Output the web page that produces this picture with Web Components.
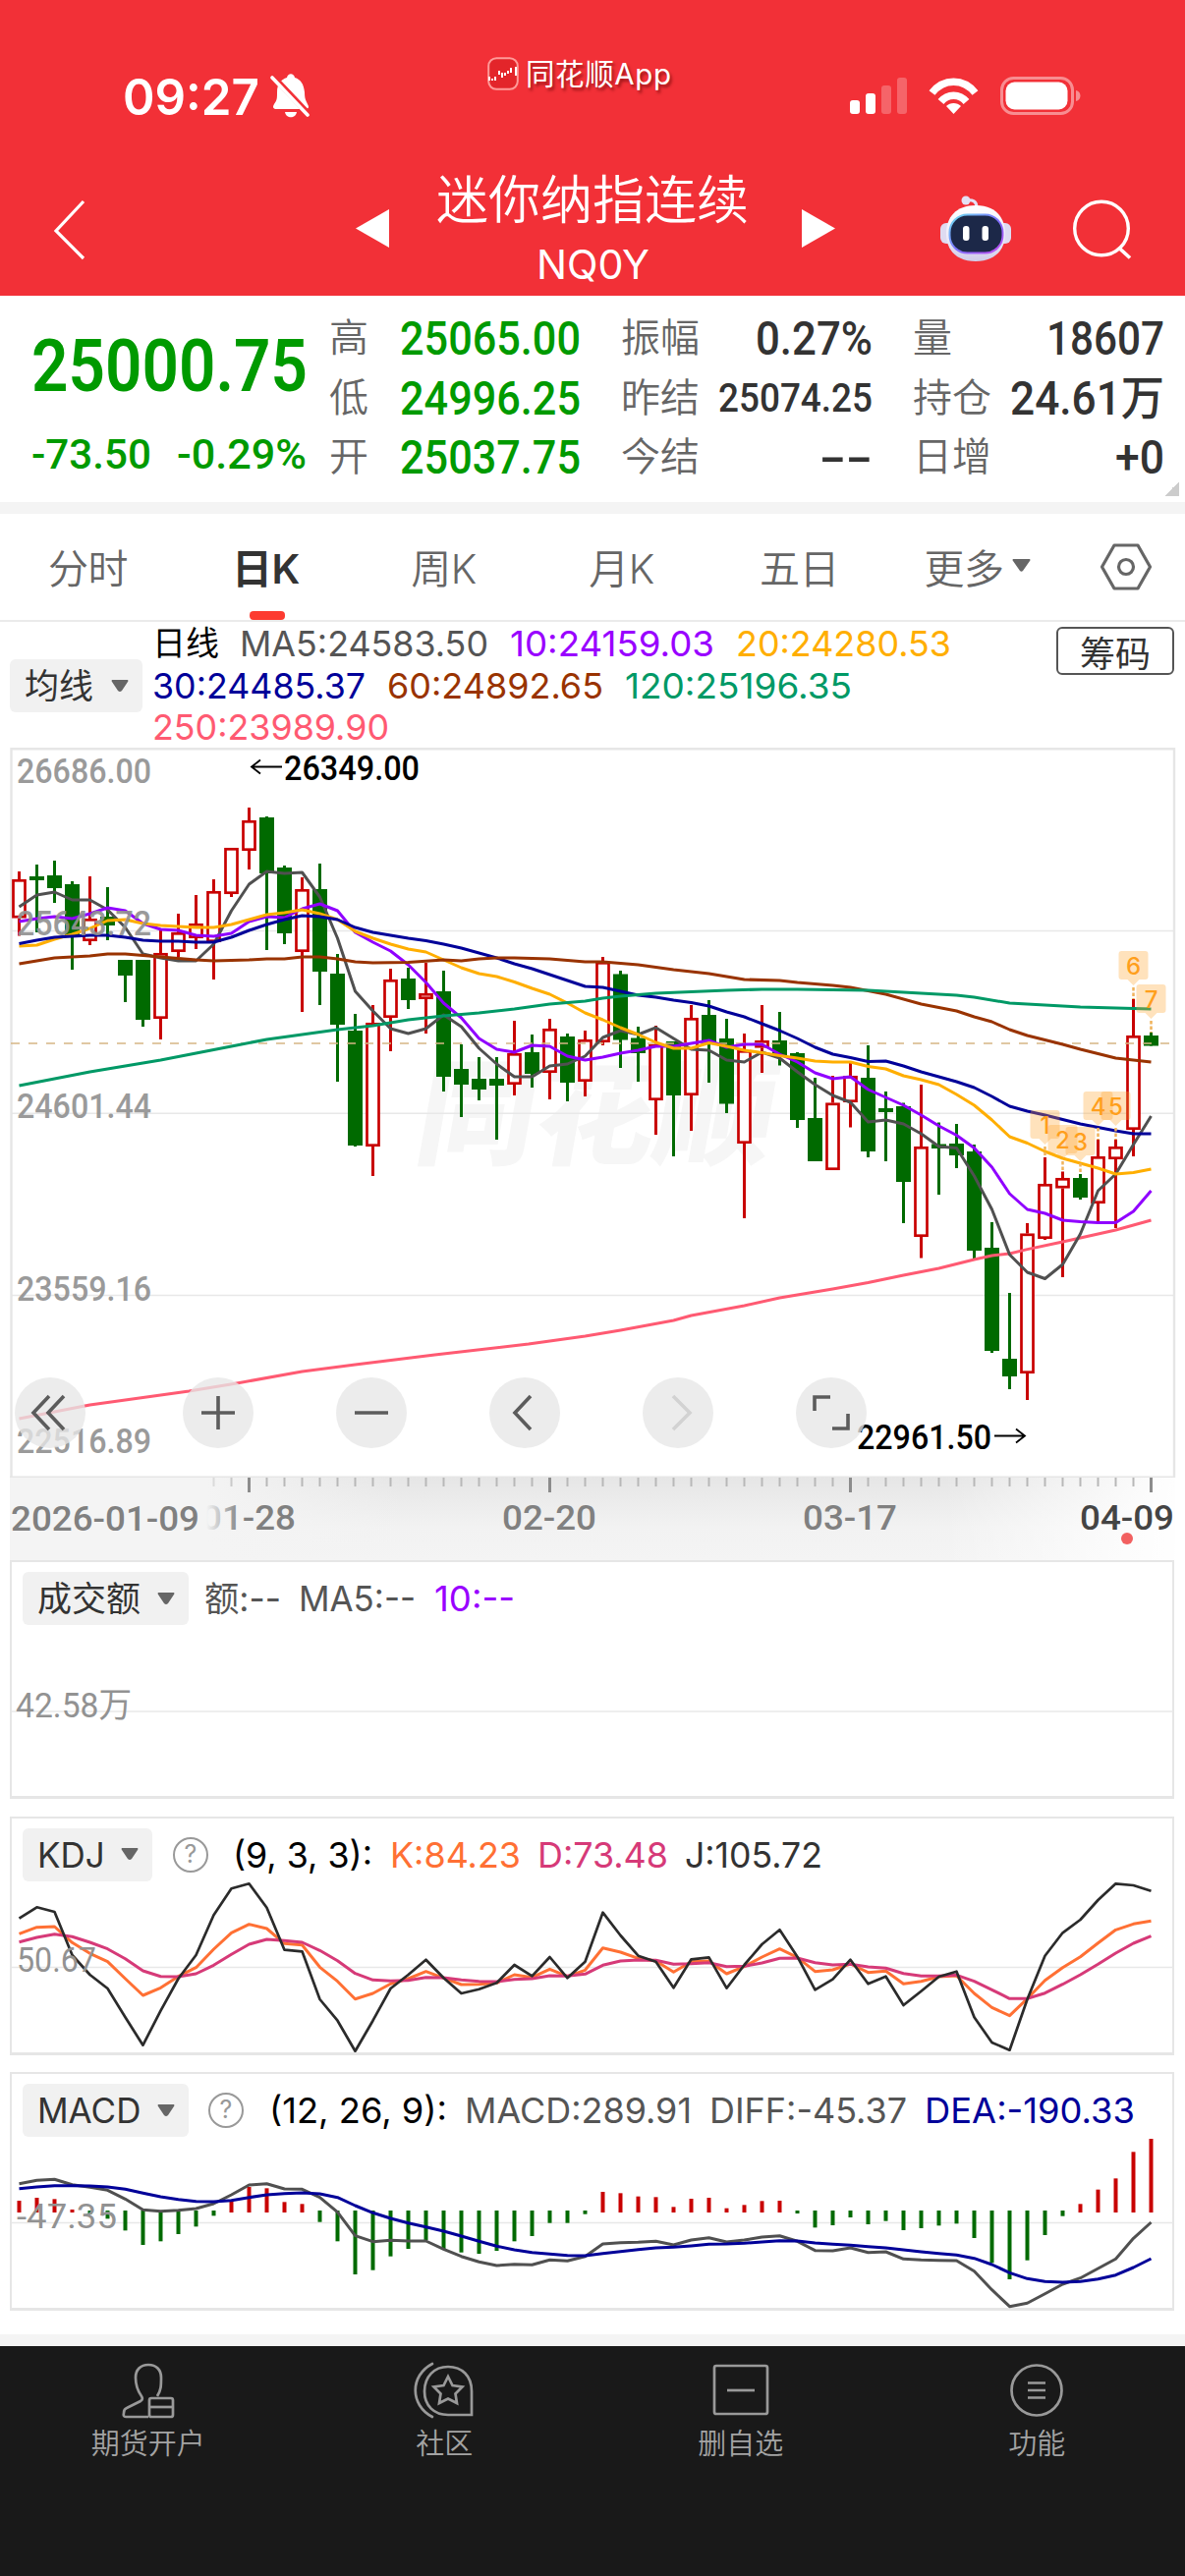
<!DOCTYPE html>
<html lang="zh-CN">
<head>
<meta charset="utf-8">
<title>迷你纳指连续 NQ0Y</title>
<style>
  * { box-sizing: border-box; }
  body {
    margin: 0;
    width: 1206px;
    height: 2622px;
    background: #fff;
    font-family: Inter, "Noto Sans CJK SC", sans-serif;
    color: #333;
    overflow: hidden;
  }
</style>
</head>
<body>
<quote-page></quote-page>

<script>
const STEP = 18;
const FIRST = 19.5;
const RED = '#c80000';
const GREEN = '#006a00';
const xAt = i => FIRST + STEP * i;

// values: list of y, or list of [index, y]
function line(values, color, k = 1, width = 3) {
  const pts = values.map((v, i) => Array.isArray(v) ? `${xAt(v[0])},${v[1]}` : `${xAt(i)},${(v / k).toFixed(1)}`);
  return `<polyline points="${pts.join(' ')}" fill="none" stroke="${color}" stroke-width="${width}" stroke-linejoin="round"/>`;
}

function label(x, y, w, text, color, cap = 25.5, weight = 500) {
  return `<text x="${x}" y="${y}" fill="${color}" font-family="Roboto, 'Noto Sans CJK SC', sans-serif" font-weight="${weight}" font-size="${cap / 0.711}" textLength="${w}" lengthAdjust="spacingAndGlyphs">${text}</text>`;
}

// Text set to an exact width; its box is exactly the cap height.
class FitText extends HTMLElement {
  constructor() {
    super();
    this.attachShadow({ mode: 'open' });
  }

  connectedCallback() {
    const w = this.getAttribute('w');
    const cap = +this.getAttribute('cap');
    const din = this.hasAttribute('din');
    const size = cap / (din ? 0.711 : 0.727);
    const family = din ? 'Roboto' : 'Inter';
    this.shadowRoot.innerHTML = `
      <style>
        :host { display: block; flex: none; }
        svg { display: block; overflow: visible; }
        text { font-family: ${family}, "Noto Sans CJK SC", sans-serif; fill: currentColor; white-space: pre; }
      </style>
      <svg width="${w}" height="${cap}"><text x="0" y="${cap}" font-size="${size}" font-weight="${this.getAttribute('weight') || 400}" textLength="${w}" lengthAdjust="spacingAndGlyphs">${this.getAttribute('text')}</text></svg>
    `;
  }
}

class StatusBar extends HTMLElement {
  constructor() {
    super();
    this.attachShadow({ mode: 'open' });
    this.shadowRoot.innerHTML = `
      <style>
        :host { display: flex; height: 163px; color: #fff; align-items: flex-start; }
        svg { display: block; flex: none; }
        .time { display: flex; align-items: center; margin: 75px 0 0 125px; gap: 11px; width: 371px; }
        .app { display: flex; align-items: center; margin-top: 57px; gap: 7px; width: 369px; height: 36px;
          font-size: 29.500px; line-height: 36px; text-shadow: 2px 3px 3px rgba(90, 0, 0, .55); white-space: nowrap; }
        .app span { letter-spacing: .6px; }
        .sys { margin-top: 76px; }
      </style>
      <div class="time">
        <fit-text text="09:27" w="139" cap="37" weight="600"></fit-text>
        <svg width="42" height="46" viewBox="0 0 42 46">
          <path d="M7 36c-4 0-5-2-3-5 3-4 3-6 3-12C7 10 11 6 17 4c1-5 7-5 8 0 6 2 9 6 10 15 0 6 1 8 3 12 2 3 1 5-3 5z" fill="#fff"/>
          <path d="M15 39h12c-1 7-11 7-12 0z" fill="#fff"/>
          <path d="M4 4l38 40" stroke="#f23037" stroke-width="6"/>
          <path d="M2 4l36 38" stroke="#fff" stroke-width="3.6" stroke-linecap="round"/>
        </svg>
      </div>
      <div class="app">
        <svg width="32" height="34" viewBox="0 0 32 34">
          <rect x="1.2" y="1.2" width="29.6" height="31.6" rx="8" fill="#e3252a" stroke="#ff9a98" stroke-width="2"/>
          <path d="M2 20v4M5 22v2M8 20v4M12 14v4M15 16v5M18 16v3M21 14v3M24 11v5M29 10v9" stroke="#fff" stroke-width="2"/>
        </svg>
        <span>同花顺App</span>
      </div>
      <svg class="sys" width="240" height="44" viewBox="865 76 240 44">
        <g fill="#fff">
          <rect x="865" y="102" width="10" height="14" rx="3"/><rect x="881" y="95" width="10" height="21" rx="3"/>
          <rect x="897" y="87" width="10" height="29" rx="3" opacity=".25"/><rect x="913" y="79" width="10" height="37" rx="3" opacity=".25"/>
          <path d="M970.500 116l-7.500-8c4-4 11-4 15 0z"/>
          <path d="M1095 92c6 1 6 10 0 11z" opacity=".45"/>
          <rect x="1023.500" y="83.500" width="63" height="28" rx="9"/>
        </g>
        <g fill="none" stroke="#fff" stroke-width="7.500">
          <path d="M948.500 94.500c12-15 32-15 44 0"/><path d="M957.500 103.500c7-8.500 19-8.500 26 0"/>
        </g>
        <rect x="1019.500" y="79.500" width="72" height="36" rx="12" fill="none" stroke="#fff" stroke-width="3" opacity=".45"/>
      </svg>
    `;
  }
}

class TitleBar extends HTMLElement {
  constructor() {
    super();
    this.attachShadow({ mode: 'open' });
    this.shadowRoot.innerHTML = `
      <style>
        :host { display: flex; height: 138px; align-items: center; padding: 1px 0 0 54px; color: #fff; box-sizing: border-box; }
        svg { display: block; flex: none; }
        .title { display: flex; flex-direction: column; align-items: center; gap: 23px; width: 318px; margin: -5px 54px 0 48px; }
        h1 { margin: 0; font-size: 53px; line-height: 54px; font-weight: 350; white-space: nowrap; }
      </style>
      <svg width="34" height="64" viewBox="0 0 34 64"><path d="M31 4L3 34l28 28" fill="none" stroke="#fff" stroke-width="3.200"/></svg>
      <svg width="34" height="39" viewBox="0 0 34 39" style="margin-left:274px"><path d="M0 19.500L34 0v39z" fill="#fff"/></svg>
      <div class="title">
        <h1><slot></slot></h1>
        <fit-text text="NQ0Y" w="115" cap="29.500"></fit-text>
      </div>
      <svg width="34" height="39" viewBox="0 0 34 39"><path d="M34 19.500L0 0v39z" fill="#fff"/></svg>
      <svg width="74" height="68" viewBox="0 0 74 68" style="margin-left:106px">
        <defs>
          <linearGradient id="shell" x1="0" y1="0" x2="0" y2="1"><stop offset="0" stop-color="#fff"/><stop offset=".6" stop-color="#eceaf7"/><stop offset="1" stop-color="#cfcbe8"/></linearGradient>
          <linearGradient id="rim" x1="0" y1="0" x2="1" y2="1"><stop offset="0" stop-color="#6fe3ee"/><stop offset=".5" stop-color="#7c74ff"/><stop offset="1" stop-color="#c24bf0"/></linearGradient>
        </defs>
        <path d="M38 12c0-6-4-8-10-7" fill="none" stroke="#e4e0f4" stroke-width="3"/><circle cx="27" cy="5" r="4.500" fill="#e4e0f4"/>
        <rect x="1" y="28" width="14" height="21" rx="6" fill="#dedbf1"/><rect x="59" y="28" width="14" height="21" rx="6" fill="#dedbf1"/>
        <path d="M37 10c20 0 30 12 30 29S56 67 37 67 7 56 7 39s10-29 30-29z" fill="url(#shell)"/>
        <rect x="10.500" y="19.500" width="54" height="39" rx="18" fill="#1c2848" stroke="url(#rim)" stroke-width="2"/>
        <rect x="24" y="31" width="6.500" height="15" rx="3" fill="#fff"/><rect x="43.500" y="31" width="6.500" height="15" rx="3" fill="#fff"/>
      </svg>
      <svg width="64" height="64" viewBox="0 0 64 64" style="margin-left:60px"><circle cx="31" cy="31.500" r="27.300" fill="none" stroke="#fff" stroke-width="3.400"/><path d="M49 51.500l11 10" stroke="#fff" stroke-width="3.600"/></svg>
    `;
  }
}

class QuoteBoard extends HTMLElement {
  constructor() {
    super();
    this.attachShadow({ mode: 'open' });
    const cell = (name, text, w, cap = 34) => `<div class="cell"><span>${name}</span><fit-text din text="${text}" w="${w}" cap="${cap}" weight="500"></fit-text></div>`;
    this.shadowRoot.innerHTML = `
      <style>
        :host { display: flex; position: relative; height: 210px; padding: 13px 0 0 32px; color: #333; }
        .price { flex: none; width: 303px; color: #009a00; padding-top: 31px; }
        .change { display: flex; gap: 26px; margin-top: 48px; }
        .col { flex: none; width: 256px; margin-right: 41px; }
        .col:last-of-type { margin-right: 0; }
        .cell { display: flex; justify-content: space-between; align-items: center; height: 60.500px; }
        .cell span { font-size: 40px; line-height: 56px; color: #666; font-weight: 350; }
        .green fit-text { color: #009a00; }
        .corner { position: absolute; right: 6px; bottom: 6px; width: 15px; height: 15px; background: linear-gradient(135deg, transparent 50%, #ccc 50%); }
      </style>
      <div class="price">
        <fit-text din text="25000.75" w="281" cap="53" weight="600"></fit-text>
        <div class="change">
          <fit-text din text="-73.50" w="122" cap="30.500" weight="500"></fit-text>
          <fit-text din text="-0.29%" w="132" cap="30.500" weight="500"></fit-text>
        </div>
      </div>
      <div class="col green">${cell('高', '25065.00', 184)}${cell('低', '24996.25', 184)}${cell('开', '25037.75', 184)}</div>
      <div class="col">${cell('振幅', '0.27%', 119)}${cell('昨结', '25074.25', 157, 29)}${cell('今结', '--', 54)}</div>
      <div class="col">${cell('量', '18607', 120)}${cell('持仓', '24.61万', 157)}${cell('日增', '+0', 50)}</div>
      <i class="corner"></i>
    `;
  }
}

class PeriodTabs extends HTMLElement {
  constructor() {
    super();
    this.attachShadow({ mode: 'open' });
    this.shadowRoot.innerHTML = `
      <style>
        :host { display: flex; height: 122px; border-top: 12px solid #f4f4f4; border-bottom: 2px solid #ebebeb; }
        div { width: 181px; display: flex; justify-content: center; align-items: center; gap: 8px; position: relative;
          padding: 0 2px 3px 0; box-sizing: border-box; font-size: 41px; color: #666; font-weight: 350; letter-spacing: -.5px; }
        .on { color: #333; font-weight: 600; }
        .on::after { content: ""; position: absolute; left: 73px; bottom: 0; width: 36px; height: 9px; border-radius: 4px; background: #fd3b30; }
        .set { width: 120px; padding: 0; }
      </style>
      <div>分时</div>
      <div class="on">日K</div>
      <div>周K</div>
      <div>月K</div>
      <div>五日</div>
      <div>更多<svg width="19" height="13" viewBox="0 0 19 13"><path d="M1 0h17q1 1 0 2L11 12q-1.500 1.500-3 0L1 2q-1-1 0-2z" fill="#666"/></svg></div>
      <div class="set"><svg width="54" height="48" viewBox="0 0 54 48"><path d="M15 2h24l12.500 22L39 46H15L2.500 24z" fill="none" stroke="#666" stroke-width="3.200" stroke-linejoin="round"/><circle cx="27" cy="24" r="7.500" fill="none" stroke="#666" stroke-width="3.200"/></svg></div>
    `;
  }
}

class DropButton extends HTMLElement {
  constructor() {
    super();
    this.attachShadow({ mode: 'open' });
    this.shadowRoot.innerHTML = `
      <style>
        :host { display: flex; flex: none; align-items: center; justify-content: space-between; height: 54px; padding: 0 14px 0 15px;
          box-sizing: border-box; background: #f1f1f1; border-radius: 6px; font-size: 35px; line-height: 50px; color: #333; white-space: nowrap; }
      </style>
      <slot></slot>
      <svg width="18" height="13" viewBox="0 0 18 13"><path d="M1 0h16q1 1 0 2l-6 9q-2 2-4 0L1 2q-1-1 0-2z" fill="#666"/></svg>
    `;
  }
}

class MaLegend extends HTMLElement {
  constructor() {
    super();
    this.attachShadow({ mode: 'open' });
    const v = (text, w, color) => `<fit-text text="${text}" w="${w}" cap="26" style="color:${color}"></fit-text>`;
    this.shadowRoot.innerHTML = `
      <style>
        :host { display: flex; height: 128px; padding-left: 10px; }
        drop-button { width: 135px; margin: 38px 10px 0 0; }
        .rows { flex: none; width: 920px; padding-top: 9px; }
        .row { display: flex; gap: 22px; height: 42.500px; }
        .row span { font-size: 34px; line-height: 26px; color: #000; margin-right: -1px; }
        button { flex: none; width: 120px; height: 49px; margin-top: 5px; padding: 0; border: 2px solid #555; border-radius: 6px; background: #fff;
          font: 400 36px/42px "Noto Sans CJK SC", sans-serif; color: #333; }
      </style>
      <drop-button>均线</drop-button>
      <div class="rows">
        <div class="row"><span>日线</span>${v('MA5:24583.50', 253, '#555')}${v('10:24159.03', 208, '#90f')}${v('20:24280.53', 219, '#ffae00')}</div>
        <div class="row">${v('30:24485.37', 217, '#009')}${v('60:24892.65', 220, '#930')}${v('120:25196.35', 231, '#096')}</div>
        <div class="row">${v('250:23989.90', 241, '#ff5a72')}</div>
      </div>
      <button>筹码</button>
    `;
  }
}

// high, body top, body bottom, low, up
const CANDLES = [
  [127,135,174.5,192.5,1],[120,132,136,189,0],[116,131,144,159,0],[137,140,194,227,0],[132,175,198,202,1],
  [143,173,182,197,0],[217,217,233,260,0],[217,217,278,285,0],[187,210,277,298,1],[170,189,209,214,1],
  [151,180,195,206,1],[135,147,199,237,1],[103,103,150,153,1],[62,75,106,125,1],[71,72,129,207,0],
  [121,123,190,201,0],[133,145,209,270,1],[119,145,229,263,0],[211,231,283,341,0],[272,289,406,407,0],
  [263,281,407,437,1],[226,237,276,310,1],[225,236,258,267,0],[220,251,257,292,1],[228,249,336,351,0],
  [303,328,344,377,0],[316,338,349,360,0],[316,338,345,400,0],[279,312,344,355,1],[293,311,333,347,0],
  [277,287,332,359,1],[292,295,342,361,0],[289,298,341,356,1],[214,219,301,304,1],[228,231.5,298.5,327,0],
  [285,296.5,312,341,0],[284,303,360,395,1],[300,300,355,417,0],[263,276,355,391,1],[258,273,303,342,0],
  [277,297,363.5,373,0],[292,309,404,480,1],[263,299,306.5,332,1],[270,299,314,324.5,0],[311,312,380,388,0],
  [337,378,422,422,0],[335,362.5,431,431,1],[322,335,362,387.5,1],[304,337,412,418,0],[351,368,372,422,0],
  [362.5,366,443,485,0],[344,407,499,520.5,1],[382.5,404.5,409,456,0],[384,404,416,429,0],[405,412,513,521,0],
  [484,510,615,617,0],[556,623,641,654,0],[485,495.5,638,665,1],[418,445,501,502,1],[432.5,439,449.5,540,1],
  [435,439,459,461,0],[400,417,465,483,1],[400,407,420,490,1],[257,294,390,417,1],[291,294,304.5,304.5,0]
];

const MA5 = [163,151,148,156,156,166,184,211,215,218,218,201,167,140,127,129,128,153,195,249,269,287,292,287,273,285,307,323,336,336,325,323,315,296,289,293,286,297,308,309,319,321,311,317,331,344,355,362,382,380,384,394,407,408.5,437,471,517,535,541.5,527,496,452,435,405,376];
const MA10 = [178,175,173,175,170,164,167,180,186,187,192,193,190,178,173,174,165,160,167,189,199,208,222,240,261,276,297,308,311,304,305,315,319,316,312,309,305,305,302,299,306,303,303,313,321,332,338,336,349,357,365,375,386,395.5,408.5,428,455,471,475,482,483.5,484.5,484.5,473,452];
const MA20 = [203,202,196,191,185,177,176,180,182,183,184,184,181,176,171,169,166,170,176,188,195,201,206,209,217,225,231,234,239.5,246,252,261,271,278,286,293,301,307,307,301.5,305,309,311.5,314.5,317,320,321,321,325.5,328,335,339,344,354,365,380,397,403.5,412,419,424,429,435,433.5,430];
const MA30 = [200.5,197,194,193,192,192,194,197,198,198,199,199,194,187,181,176,172,173,176,184,189,192,195,197.5,201,205,210,215,221,226,232,238,244,245,249,253,255,258,260.5,264,270,275,282,289,297,306,313,316.5,320.5,320,325,331,336,341,347,356,366,371,375,379.5,384,387.5,391,394,394];
const MA60 = [[0,221],[1,218],[2,215],[4,213],[5,211],[6,211],[8,214],[10,217],[11,218],[13,217],[14,216],[15,216],[16,214],[17,214],[18,216],[19,219],[20,220],[22,219.5],[24,217],[25,218],[26,216],[27,215],[28,215],[30,216],[32,219],[33,219],[35,222],[37,227],[39,231],[41,237],[43,238],[44,240],[46,243],[47,245],[49,252],[51,262],[53,269],[54,275],[55,280],[56,288],[57,294],[59,303],[60,308],[62,317],[63,319],[64,321]];
const MA120 = [[0,345],[2,338],[4,331],[6,325],[8,319],[10,312],[12,305],[14,298],[16,293],[18,288],[20,284],[22,278],[24,274],[26,271],[28,267],[30,262],[32,259],[33,256],[34,254],[36,251],[38,249.5],[40,248],[42,247],[44,247],[48,248],[50,250],[53,253],[54,255],[56,261],[60,265],[64,267]];
const MA250 = [[0,684],[4,670],[9.6,656],[12.3,648],[16,636],[19,629],[23.5,619],[28.8,608],[32,600],[34,594],[37,584],[38,579],[41,569],[43,561],[46,552],[48,545.5],[50,538],[52,531],[54,522],[55,518],[56,516],[57,511.6],[59,504],[60,500],[62,492],[64,482]];

// index, flag top, number
const FLAGS = [[58,370,1],[59,385,2],[60,387,3],[61,351,4],[62,351,5],[63,208,6],[64,242,7]];

class KlineChart extends HTMLElement {
  constructor() {
    super();
    this.attachShadow({ mode: 'open' });
    const candles = CANDLES.map(([h, t, b, l, up], i) => {
      const x = xAt(i);
      return up
        ? `<path d="M${x} ${h}V${t}M${x} ${b}V${l}" stroke="${RED}" stroke-width="3"/><rect x="${x - 6}" y="${t + 1.3}" width="12" height="${b - t - 2.6}" fill="#fff" stroke="${RED}" stroke-width="2.700"/>`
        : `<path d="M${x} ${h}V${l}" stroke="${GREEN}" stroke-width="3"/><rect x="${x - 7.5}" y="${t}" width="15" height="${b - t}" fill="${GREEN}"/>`;
    }).join('');
    const flags = FLAGS.map(([i, y, n]) => {
      const x = xAt(i);
      return `<path d="M${x - 12} ${y}h24q3 0 3 3v23q0 3-3 3h-6l-6 6-6-6h-6q-3 0-3-3v-23q0-3 3-3z" fill="#ffa530" fill-opacity=".32"/>
        <path d="M${x} ${y + 37}V${CANDLES[i][0]}" stroke="#f0b25a" stroke-width="2.500" stroke-dasharray="3.500 2"/>
        <text x="${x}" y="${y + 23.5}" text-anchor="middle" font-family="Inter" font-size="24" font-weight="500" fill="#ff9f1c">${n}</text>`;
    }).join('');
    this.shadowRoot.innerHTML = `
      <style>
        :host { display: block; position: relative; height: 743px; }
        svg { display: block; }
        .tools { position: absolute; left: 15px; bottom: 30px; display: flex; gap: 84px; }
        .tools span { width: 72px; height: 72px; border-radius: 50%; background: rgba(231, 231, 231, .78); }
        .tools span:first-child { margin-right: 15px; }
        .tools path { fill: none; stroke: #5c5c5c; stroke-width: 3.600; }
        .tools .off path { stroke: #d2d2d2; }
      </style>
      <svg width="1206" height="743" viewBox="0 1 1206 743">
        <text x="419" y="416" transform="translate(73 0) skewX(-10)" font-family="Noto Sans CJK SC" font-weight="900" font-size="118" textLength="364" lengthAdjust="spacingAndGlyphs" fill="#f6f6f6">同花顺</text>
        <path d="M12 187.500H1195M12 373.300H1195M12 558.600H1195" stroke="#e8e8e8" stroke-width="1.500"/>
        <path d="M11.500 744V2.200H1195V744" fill="none" stroke="#e6e6e6" stroke-width="2.400"/>
        <path d="M10 743.200H1196" stroke="#e6e6e6" stroke-width="1.600"/>
        ${candles}
        <path d="M11 302H1190" stroke="#d6b685" stroke-width="1.600" stroke-dasharray="9 9"/>
        ${line(MA250, '#ff5a72')}${line(MA5, '#505050')}${line(MA10, '#9000ff')}${line(MA20, '#ffae00')}${line(MA30, '#000099')}${line(MA60, '#993300')}${line(MA120, '#009966')}
        ${flags}
        <g opacity=".92">
          ${label(17, 36.5, 137, '26686.00', '#929292')}${label(17, 192, 137, '25643.72', '#929292')}${label(17, 378, 137, '24601.44', '#929292')}${label(17, 563.5, 137, '23559.16', '#929292')}${label(17, 719, 137, '22516.89', '#929292')}
        </g>
        ${label(289, 34, 138, '26349.00', '#000')}${label(872, 714.5, 137, '22961.50', '#000')}
        <path d="M287 20.500H256M265 13.500l-9 7 9 7M1012 701.500h31M1034 694.500l9 7-9 7" fill="none" stroke="#000" stroke-width="1.800"/>
      </svg>
      <div class="tools">
        <span><svg width="72" height="72"><path d="M35 19L19 36l16 17M50 19L34 36l16 17"/></svg></span>
        <span><svg width="72" height="72"><path d="M19 36h34M36 19v34"/></svg></span>
        <span><svg width="72" height="72"><path d="M19 36h34"/></svg></span>
        <span><svg width="72" height="72"><path d="M42 19L26 36l16 17"/></svg></span>
        <span class="off"><svg width="72" height="72"><path d="M31 19l17 17-17 17"/></svg></span>
        <span><svg width="72" height="72"><path d="M19 34V20h16M37 52h16V37"/></svg></span>
      </div>
    `;
  }
}

class TimeAxis extends HTMLElement {
  constructor() {
    super();
    this.attachShadow({ mode: 'open' });
    let ticks = '';
    for (let i = 11; i <= 64; i++) {
      const major = (i - 13) % 17 === 0;
      ticks += `<path d="M${xAt(i)} 0v${major ? 15 : 9}" stroke="${major ? '#8c8c8c' : '#b8b8b8'}" stroke-width="${major ? 3 : 2}" opacity="${i < 12 ? .4 : i < 13 ? .7 : 1}"/>`;
    }
    this.shadowRoot.innerHTML = `
      <style>
        :host { display: block; height: 84px; }
        svg { display: block; }
      </style>
      <svg width="1206" height="84" viewBox="0 0 1206 84">
        <defs>
          <linearGradient id="down" x2="0" y2="1"><stop offset="0" stop-color="#e6e6e6"/><stop offset=".6" stop-color="#f2f2f2"/><stop offset="1" stop-color="#f4f4f4"/></linearGradient>
          <linearGradient id="left"><stop offset="0" stop-color="#f4f4f4"/><stop offset=".5" stop-color="#f4f4f4"/><stop offset="1" stop-color="#f4f4f4" stop-opacity="0"/></linearGradient>
          <linearGradient id="right"><stop offset="0" stop-color="#fff" stop-opacity="0"/><stop offset="1" stop-color="#fff"/></linearGradient>
          <linearGradient id="fade" gradientUnits="userSpaceOnUse" x1="210" x2="245"><stop offset="0" stop-color="#808080" stop-opacity="0"/><stop offset="1" stop-color="#808080"/></linearGradient>
        </defs>
        <rect x="10" width="1186" height="84" fill="url(#down)"/>
        <rect x="10" width="400" height="84" fill="url(#left)"/>
        <rect x="960" width="246" height="84" fill="url(#right)"/>
        ${ticks}
        ${label(11, 53.5, 192, '2026-01-09', '#808080')}
        ${label(205, 53, 96, '01-28', 'url(#fade)')}
        ${label(511, 53, 96, '02-20', '#808080')}
        ${label(817, 53, 96, '03-17', '#808080')}
        ${label(1099, 53, 96, '04-09', '#444')}
        <circle cx="1147" cy="62" r="6" fill="#f26060"/>
      </svg>
    `;
  }
}

// Frame of a sub chart: header from slots, plot from the "plot" property
class IndicatorPanel extends HTMLElement {
  constructor() {
    super();
    this.attachShadow({ mode: 'open' });
    this.shadowRoot.innerHTML = `
      <style>
        :host { display: block; position: relative; height: 243px; margin: 0 11px 17.500px 10px; border: 2px solid #e6e6e6; border-bottom-width: 3px; }
        header { position: relative; display: flex; align-items: center; padding: 10px 0 0 11px; height: 64px; box-sizing: border-box; }
        #plot { position: absolute; left: -12px; top: -2px; }
        #plot svg { display: block; overflow: visible; }
      </style>
      <div id="plot"></div>
      <header><slot></slot></header>
    `;
  }

  set plot(markup) {
    this.shadowRoot.querySelector('#plot').innerHTML = `<svg width="1206" height="243" viewBox="0 0 1206 243">${markup}</svg>`;
  }
}

class HelpIcon extends HTMLElement {
  constructor() {
    super();
    this.attachShadow({ mode: 'open' });
    this.shadowRoot.innerHTML = `
      <style>
        :host { display: block; flex: none; width: 36px; height: 36px; border: 2.500px solid #999; border-radius: 50%; color: #999; font-size: 25px; line-height: 31px; text-align: center; box-sizing: border-box; }
      </style>?
    `;
  }
}

const KDJ_J = [338,304,318,450,510,552,640,725,620,522,450,328,247,232,305,434,439,585,650,743,650,552,510,464,520,567,554,535,480,514,456,520,470,320,390,452,470,550,463,457,551,480,417,373,455,556,524,464,538,515,603,560,516,500,640,717,740,585,452,382,342,282,232,237,254];
const KDJ_K = [385,365,363,412,445,470,522,573,550,515,488,432,382,356,369,415,419,487,530,584,567,538,522,500,520,540,539,535,510,518,493,515,496,428,441,460,468,502,470,468,507,485,456,431,457,500,495,477,503,499,538,530,516,513,567,610,635,583,527,488,455,413,373,355,346];
const KDJ_D = [410,396,386,394,411,431,461,498,515,516,507,481,448,417,402,406,411,436,467,506,526,529,527,518,519,526,530,531,524,522,513,514,508,481,468,465,466,478,476,473,485,484,474,460,459,473,480,478,486,490,506,514,514,511,530,556,583,583,566,539,510,478,444,414,392];
const BARS = [450,441,445,477,491,505,541,585,574,552,529,496,450,408,412,454,460,515,574,675,662,620,597,570,600,608,612,603,574,558,518,518,491,423,427,437,439,469,444,441,473,463,451,450,489,532,525,501,522,512,540,534,526,520,564,640,690,632,555,497,460,416,382,301,261];
const DIFF = [398,388,385,401,409,418,445,478,482,479,474,459,432,402,398,414,415,440,485,557,575,571,573,573,598,620,637,648,644,646,631,634,620,582,578,577,574,585,570,563,576,570,561,557,574,602,603,594,608,606,628,631,632,633,665,722,773,763,734,705,686,657,628,565,516];
const DEA = [413,408,404,404,405,408,415,427,438,446,452,453,449,440,432,428,426,429,440,465,487,504,518,530,543,558,574,589,600,608,613,617,618,611,605,599,594,592,588,583,582,580,576,572,573,579,583,586,590,594,600,606,611,616,626,645,670,688,697,699,697,689,677,654,627];

class BottomNav extends HTMLElement {
  constructor() {
    super();
    this.attachShadow({ mode: 'open' });
    this.shadowRoot.innerHTML = `
      <style>
        :host { display: flex; height: 246px; background: #191919; border-top: 12px solid #f4f4f4; color: #a3a3a3; box-sizing: border-box; }
        div { flex: 1; display: flex; flex-direction: column; align-items: center; padding-top: 15px; font-size: 29px; line-height: 34px; font-weight: 350; gap: 8px; }
        svg { display: block; fill: none; stroke: #999; stroke-width: 2.700; }
      </style>
      <div><svg width="60" height="60" viewBox="0 0 60 60"><path d="M30 57H7q-3 0-2-4 0-4 3-5l14-7q3-2 1-5c-5-7-6-12-6-19 0-8 5-13 13-13s13 5 13 13c0 8 0 13-4 19"/><rect x="31" y="38" width="24" height="19" rx="2"/><path d="M31 47h24"/></svg>期货开户</div>
      <div><svg width="62" height="60" viewBox="0 0 62 60"><path d="M19 3C-4 15-4 45 19 57" stroke-linecap="round"/><path d="M59 55V31C59 15 49 6 35 6S11 16 11 31s10 24 24 24z"/><path d="M35 16l4.500 9 10 1.500-7 7 1.500 9.500-9-4.500-9 4.500 1.500-9.500-7-7 10-1.500z"/></svg>社区</div>
      <div><svg width="60" height="60" viewBox="0 0 60 60"><rect x="3" y="5" width="54" height="49" rx="2"/><path d="M16 30h28"/></svg>删自选</div>
      <div><svg width="60" height="60" viewBox="0 0 60 60"><circle cx="30" cy="30" r="25.500"/><path d="M21 22.500h18M21 30h18M21 37.500h18"/></svg>功能</div>
    `;
  }
}

class QuotePage extends HTMLElement {
  constructor() {
    super();
    this.attachShadow({ mode: 'open' });
    const r = (text, w, color, left) => `<fit-text text="${text}" w="${w}" cap="26" style="color:${color};margin-left:${left}px"></fit-text>`;
    this.shadowRoot.innerHTML = `
      <style>
        :host { display: block; width: 1206px; }
        .top { background: #f23037; }
        quote-board, kline-chart, indicator-panel, period-tabs, ma-legend { box-sizing: border-box; }
        .panels { padding-bottom: 6.500px; }
      </style>
      <div class="top">
        <status-bar></status-bar>
        <title-bar>迷你纳指连续</title-bar>
      </div>
      <quote-board></quote-board>
      <period-tabs></period-tabs>
      <ma-legend></ma-legend>
      <kline-chart></kline-chart>
      <time-axis></time-axis>
      <div class="panels">
        <indicator-panel id="amount">
          <drop-button style="width:169px">成交额</drop-button>
          ${r('额:--', 78, '#555', 16)}${r('MA5:--', 119, '#555', 18)}${r('10:--', 82, '#90f', 19)}
        </indicator-panel>
        <indicator-panel id="kdj">
          <drop-button style="width:132px">KDJ</drop-button>
          <help-icon style="margin-left:21px"></help-icon>
          ${r('(9, 3, 3):', 142, '#000', 25)}${r('K:84.23', 133, '#ff7034', 18)}${r('D:73.48', 133, '#d63a78', 17)}${r('J:105.72', 140, '#333', 17)}
        </indicator-panel>
        <indicator-panel id="macd">
          <drop-button style="width:169px">MACD</drop-button>
          <help-icon style="margin-left:20px"></help-icon>
          ${r('(12, 26, 9):', 181, '#000', 26)}${r('MACD:289.91', 231, '#555', 18)}${r('DIFF:-45.37', 201, '#555', 18)}${r('DEA:-190.33', 214, '#009', 18)}
        </indicator-panel>
      </div>
      <bottom-nav></bottom-nav>
    `;
    const grid = y => `<path d="M12 ${y}H1194" stroke="#e8e8e8" stroke-width="1.500"/>`;
    const $ = id => this.shadowRoot.getElementById(id);

    $('amount').plot = grid(154) + label(16, 160, 118, '42.58万', '#929292', 25, 400);
    $('kdj').plot = grid(153.5) + `<g transform="translate(0 -9)">${line(KDJ_K, '#ff7034', 3)}${line(KDJ_D, '#d63a78', 3)}${line(KDJ_J, '#2b2b2b', 3, 2.7)}</g>`
      + label(17, 158, 81, '50.67', '#929292', 25, 400);
    const bars = BARS.map((v, i) => v < 482
      ? `<path d="M${xAt(i)} ${v / 3}V162" stroke="${RED}" stroke-width="4"/>`
      : `<path d="M${xAt(i)} 160V${v / 3}" stroke="${GREEN}" stroke-width="4"/>`).join('');
    $('macd').plot = grid(153.5) + `<g transform="translate(0 -19)">${bars}${line(DIFF, '#505050', 3)}${line(DEA, '#000099', 3)}</g>`
      + label(17, 159, 102, '-47.35', '#929292', 25, 400);
  }
}

customElements.define('fit-text', FitText);
customElements.define('help-icon', HelpIcon);
customElements.define('drop-button', DropButton);
customElements.define('status-bar', StatusBar);
customElements.define('title-bar', TitleBar);
customElements.define('quote-board', QuoteBoard);
customElements.define('period-tabs', PeriodTabs);
customElements.define('ma-legend', MaLegend);
customElements.define('kline-chart', KlineChart);
customElements.define('time-axis', TimeAxis);
customElements.define('indicator-panel', IndicatorPanel);
customElements.define('bottom-nav', BottomNav);
customElements.define('quote-page', QuotePage);
</script>
</body>
</html>
